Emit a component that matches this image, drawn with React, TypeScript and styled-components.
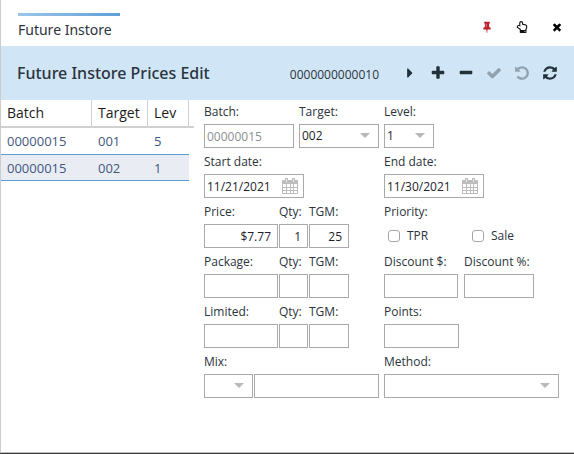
import React, { useId, useState } from "react";
import styled, { createGlobalStyle, css } from "styled-components";
import { FaRegHandPointUp } from "react-icons/fa";

const GlobalStyle = createGlobalStyle`
  *, *::before, *::after { box-sizing: border-box; }
  body {
    margin: 0;
    padding-bottom: 1px;
    background: #3a3a3a;
    color: #2b333c;
    font: 12px/24px "Open Sans", "Noto Sans", sans-serif;
  }
  button, input, select { font: inherit; color: inherit; margin: 0; }
`;

const Page = styled.div`
  display: flex;
  flex-direction: column;
  min-height: calc(100vh - 1px);
  background: #fff;
  border-left: 1px solid #cccccc;
  border-bottom: 1px solid #bdbdbd;
`;

const TabBar = styled.header`
  display: flex;
  align-items: flex-start;
  justify-content: space-between;
  height: 46px;
  padding: 13px 0 0 17px;
`;

const Tab = styled.button`
  width: 102px;
  padding: 0;
  border: 0;
  background: none;
  text-align: left;
  font: 14px/28px "Noto Sans", "Open Sans", sans-serif;
  white-space: nowrap;

  &::before {
    content: "";
    display: block;
    height: 3px;
    background: linear-gradient(90deg, #9cc5ea, #5f9fd8);
  }
`;

const WindowButtons = styled.div`
  display: flex;
`;

const IconButton = styled.button<{ $color: string; $width: number }>`
  display: flex;
  align-items: center;
  justify-content: center;
  width: ${(p) => p.$width}px;
  height: 28px;
  padding: 0;
  border: 0;
  background: none;
  color: ${(p) => p.$color};
`;

const TitleBar = styled.div`
  display: flex;
  align-items: center;
  height: 54px;
  padding: 0 10px 0 16px;
  background: #d0e6f6;
`;

const Title = styled.h1`
  flex: 1;
  margin: 0;
  font: 500 16px/24px "Noto Sans", "Open Sans", sans-serif;
  white-space: nowrap;
`;

const Code = styled.span`
  margin-right: 17px;
  padding-top: 4px;
`;

const Actions = styled.div`
  display: flex;
`;

const Body = styled.main`
  display: flex;
  flex: 1;
  align-items: flex-start;
`;

const ListPane = styled.section`
  flex: none;
  width: 193px;
  background: linear-gradient(#d0d0d0, #d0d0d0) 0 26px / 100% 2px no-repeat;
`;

const Table = styled.table`
  width: 188px;
  table-layout: fixed;
  border-collapse: separate;
  border-spacing: 0;
  text-align: left;
  font-size: 13px;
`;

const Col = styled.col<{ $width: number }>`
  width: ${(p) => p.$width}px;
`;

const HeadCell = styled.th`
  height: 28px;
  padding: 0 0 0 6px;
  border-right: 1px solid #d0d0d0;
  border-bottom: 2px solid #d0d0d0;
  color: #1c1c1c;
  font-size: 14px;
  font-weight: 400;
`;

const Row = styled.tr<{ $selected?: boolean }>`
  background: ${(p) => (p.$selected ? "#e9edf3" : "#fff")};
  color: #42567e;
`;

const Cell = styled.td`
  height: 26px;
  padding: 0 0 0 6px;
  border-bottom: 1px solid #5b9bd8;
  line-height: 22px;

  ${Row}:first-child & { height: 27px; }
`;

const Form = styled.form`
  flex: 1;
  display: grid;
  grid-template-columns: 1fr 1fr;
  gap: 2px 5px;
  padding: 0 15px 0 10px;
`;

const FieldGroup = styled.div<{ $gap?: number }>`
  display: flex;
  gap: ${(p) => p.$gap ?? 5}px;
  min-width: 0;
`;

const FieldBox = styled.div<{ $width?: number }>`
  display: flex;
  flex-direction: column;
  ${(p) => (p.$width ? css`flex: none; width: ${p.$width}px;` : css`flex: 1; min-width: 0;`)}
`;

const Label = styled.label`
  height: 24px;
  white-space: nowrap;
`;

const Control = styled.div`
  position: relative;
  display: flex;
  align-items: center;
  height: 24px;
  border: 1px solid #a9a9a9;
  background: #fff;
`;

const Input = styled.input<{ $right?: boolean }>`
  flex: 1;
  width: 100%;
  min-width: 0;
  height: 22px;
  padding: 2px ${(p) => (p.$right ? 6 : 2)}px 0;
  border: 0;
  outline: 0;
  background: none;
  text-align: ${(p) => (p.$right ? "right" : "left")};
  color: #1d232b;

  &:disabled { color: #8c8f93; }
`;

const Select = styled.select`
  appearance: none;
  width: 100%;
  height: 22px;
  padding: 0 20px 0 2px;
  border: 0;
  outline: 0;
  background: none;
  color: #1d232b;
  line-height: 22px;
`;

const Arrow = styled.span`
  position: absolute;
  right: 8px;
  top: 8px;
  border: 5px solid transparent;
  border-top-color: #b8b8b8;
  border-bottom: 0;
  pointer-events: none;
`;

const DateButton = styled.button`
  display: flex;
  margin-right: 5px;
  padding: 0;
  border: 0;
  background: none;
  color: #bdbdbd;
`;

const CheckGroup = styled.fieldset`
  min-width: 0;
  margin: 0;
  padding: 0;
  border: 0;
`;

const Legend = styled.legend`
  height: 24px;
  padding: 0;
`;

const CheckRow = styled.div`
  display: flex;
  padding-left: 4px;
`;

const CheckLabel = styled.label`
  display: flex;
  align-items: center;
  gap: 7px;
  width: 84px;
`;

const CheckBox = styled.input`
  appearance: none;
  width: 12px;
  height: 12px;
  border: 1px solid #a6a6a6;
  border-radius: 3px;
  background: #fff;

  &:checked { background: #5b9bd8; }
`;

const paths = {
  pin: "M800 864v-448q0-14-9-23t-23-9-23 9-9 23v448q0 14 9 23t23 9 23-9 9-23zm672 352q0 26-19 45t-45 19h-429l-51 483q-2 12-10.5 20.5t-20.5 8.5h-1q-27 0-32-27l-76-485h-404q-26 0-45-19t-19-45q0-123 78.5-221.5t177.5-98.5v-512q-52 0-90-38t-38-90 38-90 90-38h640q52 0 90 38t38 90-38 90-90 38v512q99 0 177.5 98.5t78.5 221.5z",
  close: "M1490 1322q0 40-28 68l-136 136q-28 28-68 28t-68-28l-294-294-294 294q-28 28-68 28t-68-28l-136-136q-28-28-28-68t28-68l294-294-294-294q-28-28-28-68t28-68l136-136q28-28 68-28t68 28l294 294 294-294q28-28 68-28t68 28l136 136q28 28 28 68t-28 68l-294 294 294 294q28 28 28 68z",
  next: "M1152 896q0 26-19 45l-448 448q-19 19-45 19t-45-19-19-45v-896q0-26 19-45t45-19 45 19l448 448q19 19 19 45z",
  plus: "M1600 736v192q0 40-28 68t-68 28h-416v416q0 40-28 68t-68 28h-192q-40 0-68-28t-28-68v-416h-416q-40 0-68-28t-28-68v-192q0-40 28-68t68-28h416v-416q0-40 28-68t68-28h192q40 0 68 28t28 68v416h416q40 0 68 28t28 68z",
  minus: "M1600 736v192q0 40-28 68t-68 28h-1216q-40 0-68-28t-28-68v-192q0-40 28-68t68-28h1216q40 0 68 28t28 68z",
  check: "M1671 566q0 40-28 68l-724 724-136 136q-28 28-68 28t-68-28l-136-136-362-362q-28-28-28-68t28-68l136-136q28-28 68-28t68 28l294 295 656-657q28-28 68-28t68 28l136 136q28 28 28 68z",
  undo: "M1664 896q0 156-61 298t-164 245-245 164-298 61q-172 0-327-72.5t-264-204.5q-7-10-6.5-22.5t8.5-20.5l137-138q10-9 25-9 16 2 23 12 73 95 179 147t225 52q104 0 198.5-40.5t163.5-109.5 109.5-163.5 40.5-198.5-40.5-198.5-109.5-163.5-163.5-109.5-198.5-40.5q-98 0-188 35.5t-160 101.5l137 138q31 30 14 69-17 40-59 40h-448q-26 0-45-19t-19-45v-448q0-42 40-59 39-17 69 14l130 129q107-101 244.5-156.5t284.5-55.5q156 0 298 61t245 164 164 245 61 298z",
  refresh: "M1639 1056q0 5-1 7-64 268-268 434.5t-478 166.5q-146 0-282.5-55t-243.5-157l-129 129q-19 19-45 19t-45-19-19-45v-448q0-26 19-45t45-19h448q26 0 45 19t19 45-19 45l-137 137q71 66 161 102t187 36q134 0 250-65t186-179q11-17 53-117 8-23 30-23h192q13 0 22.5 9.5t9.5 22.5zm25-800v448q0 26-19 45t-45 19h-448q-26 0-45-19t-19-45 19-45l138-138q-148-137-349-137-134 0-250 65t-186 179q-11 17-53 117-8 23-30 23h-199q-13 0-22.5-9.5t-9.5-22.5v-7q65-268 270-434.5t480-166.5q146 0 284 55.5t245 156.5l130-129q19-19 45-19t45 19 19 45z",
};

function Icon({ name, size }: { name: keyof typeof paths; size: number }) {
  return (
    <svg width={size} height={size} viewBox="0 0 1792 1792" fill="currentColor" aria-hidden="true">
      <path d={paths[name]} />
    </svg>
  );
}

function CalendarIcon() {
  return (
    <svg width="16" height="16" viewBox="0 0 16 16" fill="none" stroke="currentColor" aria-hidden="true">
      <path d="M1 2.5h14v3H1z" fill="currentColor" />
      <path d="M.5 2.5h15v13H.5zM4.5 6v9M8.5 6v9M11.5 6v9M1 9.5h14M1 12.5h14" />
      <path d="M4.5 0v4M11.5 0v4" strokeWidth="3" />
      <path d="M4.5 1v3M11.5 1v3" stroke="#e8e8e8" />
    </svg>
  );
}

type FieldProps = { label: string; width?: number; value?: string; right?: boolean; disabled?: boolean };

function TextField({ label, width, value = "", right, disabled }: FieldProps) {
  const id = useId();
  return (
    <FieldBox $width={width}>
      <Label htmlFor={id}>{label}</Label>
      <Control>
        <Input id={id} defaultValue={value} $right={right} disabled={disabled} />
      </Control>
    </FieldBox>
  );
}

function SelectField({ label, width, options }: { label: string; width?: number; options: string[] }) {
  const id = useId();
  return (
    <FieldBox $width={width}>
      <Label htmlFor={id}>{label}</Label>
      <Control>
        <Select id={id}>
          {options.map((o) => (
            <option key={o}>{o}</option>
          ))}
        </Select>
        <Arrow />
      </Control>
    </FieldBox>
  );
}

function DateField({ label, value }: { label: string; value: string }) {
  const id = useId();
  return (
    <FieldBox $width={100}>
      <Label htmlFor={id}>{label}</Label>
      <Control>
        <Input id={id} defaultValue={value} />
        <DateButton type="button" aria-label={`Choose ${label}`}>
          <CalendarIcon />
        </DateButton>
      </Control>
    </FieldBox>
  );
}

function AmountGroup({ label, values = ["", "", ""] }: { label: string; values?: string[] }) {
  return (
    <FieldGroup $gap={1}>
      <TextField label={label} width={74} value={values[0]} right />
      <TextField label="Qty:" width={29} value={values[1]} right />
      <TextField label="TGM:" width={40} value={values[2]} right />
    </FieldGroup>
  );
}

const rows = [
  { batch: "00000015", target: "001", level: "5" },
  { batch: "00000015", target: "002", level: "1" },
];

const actions: { name: keyof typeof paths; label: string; color: string }[] = [
  { name: "next", label: "Next", color: "#22313a" },
  { name: "plus", label: "Add", color: "#22313a" },
  { name: "minus", label: "Remove", color: "#22313a" },
  { name: "check", label: "Save", color: "#91a1ae" },
  { name: "undo", label: "Undo", color: "#91a1ae" },
  { name: "refresh", label: "Refresh", color: "#22313a" },
];

export default function App() {
  const [selected, setSelected] = useState(1);
  const mixId = useId();
  return (
    <>
      <GlobalStyle />
      <Page>
        <TabBar>
          <Tab type="button">Future Instore</Tab>
          <WindowButtons>
            <IconButton type="button" aria-label="Pin" $color="#c0202c" $width={35}>
              <Icon name="pin" size={12} />
            </IconButton>
            <IconButton type="button" aria-label="Detach" $color="#111" $width={35}>
              <FaRegHandPointUp size={12} />
            </IconButton>
            <IconButton type="button" aria-label="Close" $color="#000" $width={35}>
              <Icon name="close" size={12} />
            </IconButton>
          </WindowButtons>
        </TabBar>
        <TitleBar>
          <Title>Future Instore Prices Edit</Title>
          <Code>0000000000010</Code>
          <Actions>
            {actions.map((a) => (
              <IconButton key={a.name} type="button" aria-label={a.label} $color={a.color} $width={28}>
                <Icon name={a.name} size={16} />
              </IconButton>
            ))}
          </Actions>
        </TitleBar>
        <Body>
          <ListPane>
            <Table>
              <colgroup>
                <Col $width={91} />
                <Col $width={56} />
                <Col $width={41} />
              </colgroup>
              <thead>
                <tr>
                  <HeadCell>Batch</HeadCell>
                  <HeadCell>Target</HeadCell>
                  <HeadCell>Lev</HeadCell>
                </tr>
              </thead>
              <tbody>
                {rows.map((r, i) => (
                  <Row key={r.target} $selected={i === selected} onClick={() => setSelected(i)}>
                    <Cell>{r.batch}</Cell>
                    <Cell>{r.target}</Cell>
                    <Cell>{r.level}</Cell>
                  </Row>
                ))}
              </tbody>
            </Table>
          </ListPane>
          <Form>
            <FieldGroup>
              <TextField label="Batch:" width={90} value="00000015" disabled />
              <SelectField label="Target:" options={["002", "001"]} />
            </FieldGroup>
            <FieldGroup>
              <SelectField label="Level:" width={50} options={["1", "5"]} />
            </FieldGroup>
            <DateField label="Start date:" value="11/21/2021" />
            <DateField label="End date:" value="11/30/2021" />
            <AmountGroup label="Price:" values={["$7.77", "1", "25"]} />
            <CheckGroup>
              <Legend>Priority:</Legend>
              <CheckRow>
                <CheckLabel>
                  <CheckBox type="checkbox" />
                  TPR
                </CheckLabel>
                <CheckLabel>
                  <CheckBox type="checkbox" />
                  Sale
                </CheckLabel>
              </CheckRow>
            </CheckGroup>
            <AmountGroup label="Package:" />
            <FieldGroup $gap={6}>
              <TextField label="Discount $:" width={74} right />
              <TextField label="Discount %:" width={70} right />
            </FieldGroup>
            <AmountGroup label="Limited:" />
            <FieldGroup>
              <TextField label="Points:" width={75} right />
            </FieldGroup>
            <FieldBox>
              <Label htmlFor={mixId}>Mix:</Label>
              <FieldGroup $gap={1}>
                <FieldBox $width={49}>
                  <Control>
                    <Select id={mixId}>
                      <option></option>
                    </Select>
                    <Arrow />
                  </Control>
                </FieldBox>
                <FieldBox>
                  <Control>
                    <Input aria-label="Mix description" />
                  </Control>
                </FieldBox>
              </FieldGroup>
            </FieldBox>
            <SelectField label="Method:" options={[""]} />
          </Form>
        </Body>
      </Page>
    </>
  );
}
